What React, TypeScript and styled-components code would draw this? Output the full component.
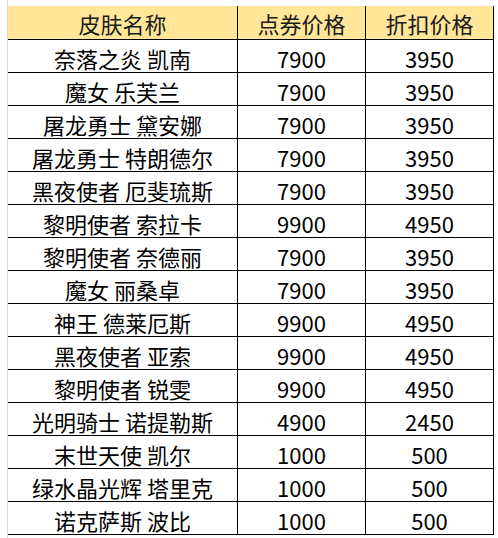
import React from "react";
import styled, { createGlobalStyle } from "styled-components";

const GlobalStyle = createGlobalStyle`
  html, body {
    margin: 0;
    padding: 0;
    background: #ffffff;
  }
  body {
    font-family: "Noto Sans CJK SC", "Noto Sans", sans-serif;
  }
`;

const Page = styled.div`
  padding-left: 7px;
  height: 538px;
  box-sizing: border-box;
`;

const Sheet = styled.div`
  border-left: 1px solid #d4d4d4;
  height: 100%;
  padding-top: 6px;
  box-sizing: border-box;
`;

const Table = styled.div`
  display: grid;
  grid-template-columns: 230px 128px 128px;
  font-family: "Noto Sans CJK SC", "Noto Sans", sans-serif;
  font-size: 22px;
  color: #000000;
`;

const HeaderCell = styled.div`
  height: 34px;
  box-sizing: border-box;
  background: #ffe699;
  border-right: 1px solid #000000;
  border-bottom: 1px solid #000000;
  display: flex;
  align-items: center;
  justify-content: center;
  line-height: 1;
  color: #1a1a1a;
  padding-top: 1px;
`;

const Cell = styled.div`
  height: 33px;
  box-sizing: border-box;
  border-right: 1px solid #000000;
  border-bottom: 1px solid #000000;
  display: flex;
  align-items: center;
  justify-content: center;
  line-height: 1;
  padding-top: 3px;
  white-space: nowrap;
`;

const rows: [string, string, string][] = [
  ["奈落之炎 凯南", "7900", "3950"],
  ["魔女 乐芙兰", "7900", "3950"],
  ["屠龙勇士 黛安娜", "7900", "3950"],
  ["屠龙勇士 特朗德尔", "7900", "3950"],
  ["黑夜使者 厄斐琉斯", "7900", "3950"],
  ["黎明使者 索拉卡", "9900", "4950"],
  ["黎明使者 奈德丽", "7900", "3950"],
  ["魔女 丽桑卓", "7900", "3950"],
  ["神王 德莱厄斯", "9900", "4950"],
  ["黑夜使者 亚索", "9900", "4950"],
  ["黎明使者 锐雯", "9900", "4950"],
  ["光明骑士 诺提勒斯", "4900", "2450"],
  ["末世天使 凯尔", "1000", "500"],
  ["绿水晶光辉 塔里克", "1000", "500"],
  ["诺克萨斯 波比", "1000", "500"],
];

export default function App() {
  return (
    <>
      <GlobalStyle />
      <Page>
        <Sheet>
          <Table>
            <HeaderCell>皮肤名称</HeaderCell>
            <HeaderCell>点券价格</HeaderCell>
            <HeaderCell>折扣价格</HeaderCell>
            {rows.map((r, i) => (
              <React.Fragment key={i}>
                <Cell>{r[0]}</Cell>
                <Cell>{r[1]}</Cell>
                <Cell>{r[2]}</Cell>
              </React.Fragment>
            ))}
          </Table>
        </Sheet>
      </Page>
    </>
  );
}
